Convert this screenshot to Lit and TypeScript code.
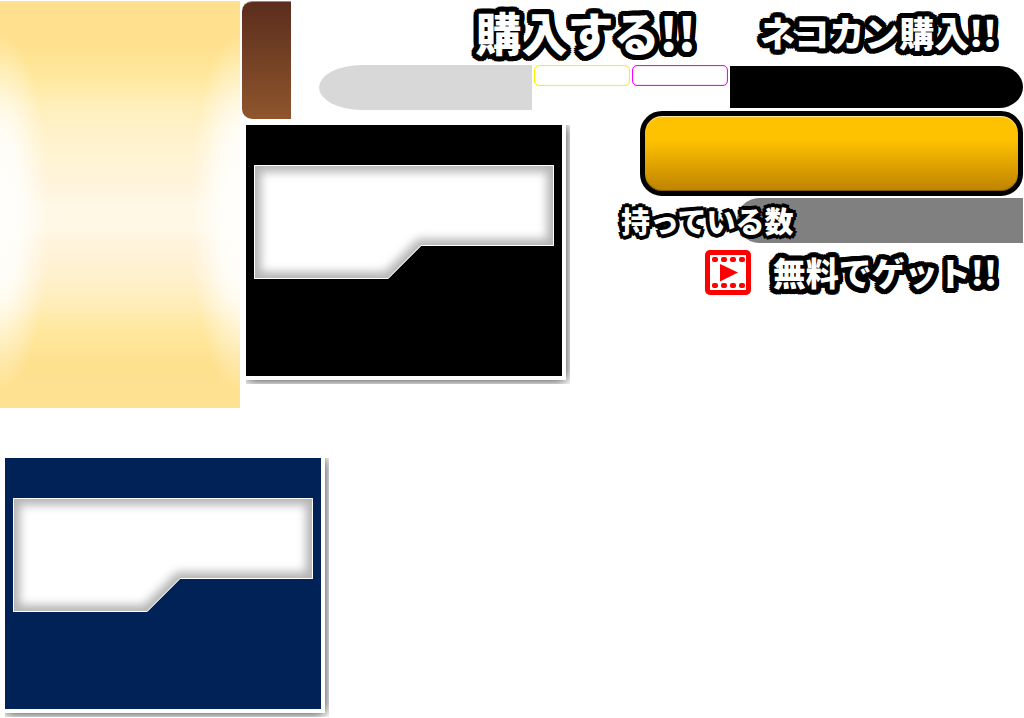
import { LitElement, html, css } from "lit";
import { customElement } from "lit/decorators.js";

/** Framed board with a notched, softly shaded window. */
@customElement("notched-panel")
class NotchedPanel extends LitElement {
  static styles = css`
    :host {
      display: block;
      width: 324px;
      --panel-color: #000;
    }
    .frame {
      overflow: hidden;
      padding: 0 4px 4px 0;
    }
    .board {
      background: var(--panel-color);
      border: solid #fff;
      border-width: 0 4px 4px 0;
      box-shadow: 0 0 12px rgba(0, 0, 0, 0.85);
    }
    .window {
      display: block;
      width: 100%;
    }
  `;

  render() {
    return html`
      <div class="frame">
        <div class="board">
          <svg class="window" viewBox="0 0 316 251" aria-hidden="true">
            <defs>
              <clipPath id="notch">
                <path d="M8 40H308V121H175L142 154H8Z" />
              </clipPath>
              <filter id="soft" x="-20%" y="-40%" width="140%" height="180%" color-interpolation-filters="sRGB">
                <feGaussianBlur stdDeviation="5" />
              </filter>
            </defs>
            <g clip-path="url(#notch)">
              <path d="M8 40H308V121H175L142 154H8Z" fill="#fff" />
              <path
                d="M-12 20H328V141H183L150 174H-12Z M15 47V147H139L172 114H301V47Z"
                fill="#b4b4b4"
                fill-rule="evenodd"
                filter="url(#soft)"
              />
            </g>
            <path
              d="M8.5 40.5H307.5V120.5H175L142 153.5H8.5Z"
              fill="none"
              stroke="#fff"
            />
          </svg>
        </div>
      </div>
    `;
  }
}

@customElement("app-root")
class AppRoot extends LitElement {
  static styles = css`
    :host {
      display: block;
      background: #fff;
      font-family: "Noto Sans CJK JP", "Noto Sans", sans-serif;
      font-weight: 900;
    }
    .top {
      display: flex;
      gap: 2px;
      padding: 1px 1px 0 0;
    }
    .glow {
      flex: none;
      width: 240px;
      height: 407px;
      background:
        radial-gradient(50px 180px at 0 52%, #fffefb 20%, #fffefbdd 45%, #fffefb66 72%, #fffefb00),
        radial-gradient(50px 180px at 100% 52%, #fffefb 20%, #fffefbdd 45%, #fffefb66 72%, #fffefb00),
        linear-gradient(
          #fee090 0,
          #fee18f 45px,
          #fee596 62px,
          #ffeaa5 84px,
          #fff0c0 110px,
          #fff3d0 145px,
          #fff4dc 185px,
          #fff8e6 205px,
          #fff8e5 228px,
          #fff3dc 240px,
          #fff1cf 275px,
          #ffedb8 305px,
          #ffe8a0 325px,
          #fee18f 362px,
          #fee192
        );
    }
    .sheet {
      flex: 1;
      display: grid;
      grid-template-columns: 49px 279px 1fr;
      grid-template-rows: 64px 46px 14px auto;
    }
    .tab {
      grid-area: 1 / 1 / 4 / 2;
      height: 117px;
      border-top: 1px solid #a58c6c;
      border-radius: 10px 0 0 10px;
      background: linear-gradient(#5b2d1d, #8f562d);
    }
    .titles {
      grid-area: 1 / 2 / 2 / 4;
      display: flex;
      justify-content: flex-end;
      align-items: flex-start;
      gap: 64px;
      padding-right: 26px;
    }
    .title,
    .caption {
      margin: 0;
      color: #fff;
      font-weight: 900;
      white-space: nowrap;
      text-shadow:
        5px 0 #000, -5px 0 #000, 0 5px #000, 0 -5px #000,
        4px 4px #000, -4px 4px #000, 4px -4px #000, -4px -4px #000,
        5px 2px #000, -5px 2px #000, 5px -2px #000, -5px -2px #000,
        2px 5px #000, -2px 5px #000, 2px -5px #000, -2px -5px #000,
        2px 2px #000, -2px 2px #000, 2px -2px #000, -2px -2px #000;
    }
    .large {
      font-size: 46px;
      line-height: 60px;
    }
    .medium {
      font-size: 35px;
      line-height: 62px;
    }
    .small {
      font-size: 33px;
      line-height: 54px;
    }
    .caption {
      position: relative;
      z-index: 1;
      font-size: 29px;
      line-height: 45px;
      text-shadow:
        4px 0 #000, -4px 0 #000, 0 4px #000, 0 -4px #000,
        3px 3px #000, -3px 3px #000, 3px -3px #000, -3px -3px #000,
        2px 0 #000, -2px 0 #000, 0 2px #000, 0 -2px #000;
    }
    .bars {
      grid-area: 2 / 2 / 3 / 4;
      display: flex;
      align-items: flex-start;
      gap: 2px;
      padding-left: 28px;
    }
    .bar {
      box-sizing: border-box;
    }
    .silver {
      width: 213px;
      height: 45px;
      border-radius: 44px 0 0 44px / 23px 0 0 23px;
      background: #d8d8d8;
    }
    .outline {
      width: 96px;
      height: 21px;
      border: 1px solid;
      border-radius: 5px;
    }
    .yellow {
      border-color: #fff000;
      box-shadow: inset 0 0 1px #fff000;
    }
    .magenta {
      border-color: #f0f;
      box-shadow: inset 0 0 1px #f0f;
    }
    .black {
      flex: 1;
      height: 42px;
      margin-top: 1px;
      border-radius: 0 24px 24px 0 / 0 21px 21px 0;
      background: #000;
    }
    .panel {
      grid-area: 4 / 1 / 5 / 3;
      margin-left: 4px;
    }
    .actions {
      grid-area: 3 / 3 / 5 / 4;
      display: flex;
      flex-direction: column;
      gap: 2px;
    }
    .buy {
      height: 85px;
      margin-left: 70px;
      padding: 0;
      border: 5px solid #000;
      border-radius: 22px;
      background: linear-gradient(#ffc200 32%, #c48800 94%);
      box-shadow: inset 0 1px 1px #ffe9a0, inset 0 -1px 1px #805800;
    }
    .owned {
      display: flex;
      padding-left: 51px;
    }
    .count {
      flex: 1;
      height: 45px;
      margin-left: -57px;
      border-radius: 22px 0 0 22px;
      background: #808080;
    }
    .free {
      display: flex;
      justify-content: flex-end;
      align-items: center;
      gap: 22px;
      padding-right: 26px;
    }
    .film {
      flex: none;
      width: 46px;
      height: 45px;
    }
    .lower {
      padding: 50px 5px 0;
    }
    .navy {
      --panel-color: #002256;
    }
  `;

  render() {
    return html`
      <main>
        <section class="top">
          <div class="glow"></div>
          <div class="sheet">
            <div class="tab"></div>
            <div class="titles">
              <h1 class="title large">購入する!!</h1>
              <h2 class="title medium">ネコカン購入!!</h2>
            </div>
            <div class="bars">
              <div class="bar silver"></div>
              <div class="bar outline yellow"></div>
              <div class="bar outline magenta"></div>
              <div class="bar black"></div>
            </div>
            <notched-panel class="panel"></notched-panel>
            <div class="actions">
              <button class="buy" type="button" aria-label="購入する"></button>
              <div class="owned">
                <p class="caption">持っている数</p>
                <div class="count"></div>
              </div>
              <div class="free">
                <svg class="film" viewBox="0 0 46 45" aria-hidden="true">
                  <rect width="46" height="45" rx="5" fill="#f00" />
                  <rect x="5" y="5" width="36" height="35" fill="#fff" />
                  <g fill="#f00">
                    <rect x="7" y="7" width="6" height="5" rx="2" />
                    <rect x="16" y="7" width="6" height="5" rx="2" />
                    <rect x="25" y="7" width="6" height="5" rx="2" />
                    <rect x="34" y="7" width="6" height="5" rx="2" />
                    <rect x="7" y="33" width="6" height="5" rx="2" />
                    <rect x="16" y="33" width="6" height="5" rx="2" />
                    <rect x="25" y="33" width="6" height="5" rx="2" />
                    <rect x="34" y="33" width="6" height="5" rx="2" />
                    <path d="M15 14L33 22.500L15 31.500Z" />
                  </g>
                </svg>
                <h2 class="title small">無料でゲット!!</h2>
              </div>
            </div>
          </div>
        </section>
        <section class="lower">
          <notched-panel class="navy"></notched-panel>
        </section>
      </main>
    `;
  }
}
